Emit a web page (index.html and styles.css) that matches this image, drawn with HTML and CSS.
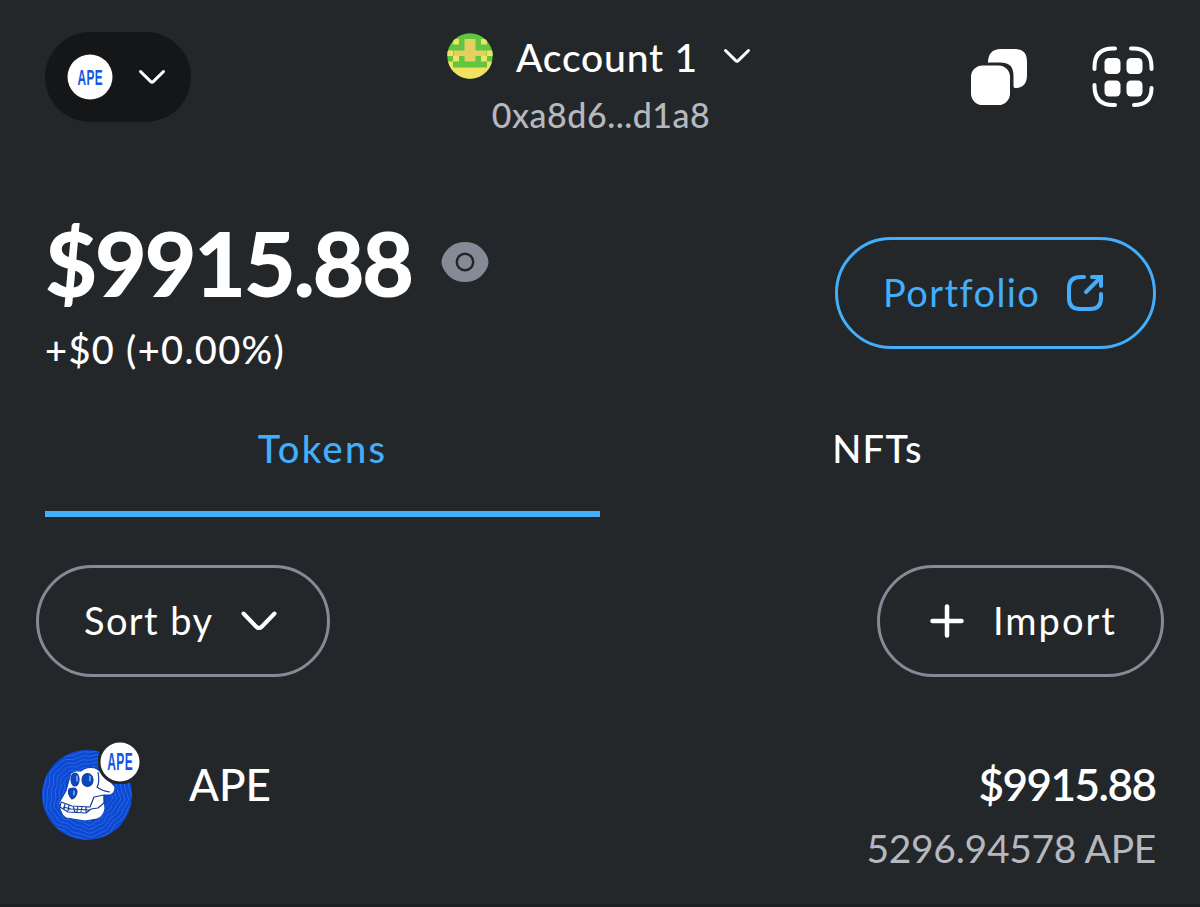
FILE: index.html
```html
<!DOCTYPE html>
<html lang="en">
<head>
<meta charset="utf-8">
<title>Wallet</title>
<link rel="stylesheet" href="styles.css">
</head>
<body>
<main class="wallet">
  <header class="header">
    <div class="network">
      <svg class="network-logo" viewBox="0 0 46 46"><circle cx="23" cy="23" r="22.5" fill="#fff"/><text class="ape-text" transform="translate(10.500 31) scale(1 1.850)" font-size="11.800">APE</text></svg>
      <svg class="chevron" viewBox="0 0 28 16"><path d="M2.5 2.5 12.5 12.4Q14 13.8 15.5 12.4L25.5 2.5"/></svg>
    </div>
    <div class="account">
      <div class="account-row">
        <svg class="avatar" viewBox="0 0 46 46">
          <clipPath id="avatar-clip"><circle cx="23" cy="23" r="22.7"/></clipPath>
          <g clip-path="url(#avatar-clip)">
            <path fill="#61c53f" d="M0 0h46v46H0z"/>
            <path fill="#f3e162" d="M6 6h6v5.500H6zM34 6h6v5.500h-6zM0 17.500h6v5.500H0zM40 17.500h6v5.500h-6zM6 23h6v5.500H6zM34 23h6v5.500h-6zM0 28.500h6v6H0zM40 28.500h6v6h-6zM0 34.500h46V46H0z"/>
            <path fill="#e3cf62" d="M17.500 6h11v11.500H39.500V23H28.500v5.500h-11V23H6.500v-5.500h11z"/>
          </g>
        </svg>
        <span class="account-name">Account 1</span>
        <svg class="chevron account-chevron" viewBox="0 0 28 16"><path d="M2.5 2.5 12.5 12.4Q14 13.8 15.5 12.4L25.5 2.5"/></svg>
      </div>
      <span class="address">0xa8d6...d1a8</span>
    </div>
    <div class="actions">
      <svg class="copy" viewBox="0 0 58 58"><rect x="1" y="17.5" width="39" height="39.5" rx="11.5"/><path d="M18 15C18 6 22 1 31 1H44C53 1 57 5 57 14V27C57 36 53 40 45 40Q43.5 40 43.5 38V28C43.5 18 39 14.5 30 14.5H19Z"/></svg>
      <svg class="scan" viewBox="0 0 62 62"><path class="scan-frame" d="M23 2.5H21Q2.5 2.5 2.5 21V23M39 2.5H41Q59.5 2.5 59.5 21V23M23 59H21Q2.5 59 2.5 40V39M42 59Q59.5 59 59.5 42"/><g fill="#fff"><rect x="12.5" y="12" width="16" height="16" rx="4.500"/><rect x="34.5" y="12" width="16" height="16" rx="4.500"/><rect x="12.5" y="34.5" width="16" height="16" rx="4.500"/><rect x="34.5" y="34.5" width="16" height="16" rx="4.500"/></g></svg>
    </div>
  </header>

  <section class="summary">
    <div class="totals">
      <div class="balance-row"><span class="balance">$9915.88</span>
        <svg class="eye" viewBox="0 0 48 42"><path fill="#858b96" d="M24 1C35 1 42 7 46 15Q49 21 46 27C42 35 35 41 24 41S6 35 2 27Q-1 21 2 15C6 7 13 1 24 1Z"/><circle cx="24" cy="21" r="8.2" fill="none" stroke="#24272a" stroke-width="2.5"/></svg>
      </div>
      <span class="change">+$0 (+0.00%)</span>
    </div>
    <div class="pill portfolio"><span>Portfolio</span>
      <svg class="export" viewBox="0 0 36 36"><path d="M17 2H14Q2 2 2 13V23Q2 34 13 34H23Q34 34 34 23V19M19 17 33 3M25 2H34V11"/></svg>
    </div>
  </section>

  <nav class="tabs">
    <div class="tab tab-active"><span>Tokens</span></div>
    <div class="tab"><span>NFTs</span></div>
  </nav>

  <section class="controls">
    <div class="pill sort"><span>Sort by</span>
      <svg class="sort-chevron" viewBox="0 0 36 20"><path d="M2.5 2.5 15 15.5Q18 18.5 21 15.5L33.5 2.5"/></svg>
    </div>
    <div class="pill import">
      <svg class="plus" viewBox="0 0 34 34"><path d="M17 2.5V31.5M2.5 17H31.5"/></svg><span>Import</span>
    </div>
  </section>

  <section class="token">
    <div class="token-logo">
      <svg class="coin" viewBox="0 0 92 92">
        <clipPath id="coin-clip"><circle cx="46" cy="46" r="45"/></clipPath>
        <g clip-path="url(#coin-clip)">
          <path fill="#0d49d2" d="M0 0h92v92H0z"/>
          <g id="waves" class="waves"></g>
          <path fill="#fff" stroke="#0a3fb4" d="M30 24Q34 21 40 22Q46 17 54 19L62 24 74 38Q74 44 69 46L63 46 64 60Q62 68 56 70L44 72 25 69Q21 67 19 60L18 54 25 42 28 31Z"/>
          <g class="skull-line">
            <g fill="#0848c4"><ellipse cx="34" cy="30.500" rx="4" ry="6.500"/><ellipse cx="46.500" cy="31" rx="5.500" ry="6.500"/><path d="M28 40Q36 37 36 43 35 49 31 50 26 45 28 40Z"/></g>
            <path d="M57 23Q59 34 56 38 61 42 69 43M63 46 53 48 49 58 31 57 20 53 19 58 27 63 45 64 50 60M63 46V54L57 59 50 60M24 55 23 60M28 56 27 62M32 57 34 63M37 57 36 63M41 57 40 63M45 58V63M22 58 30 60 48 61"/>
          </g>
          <path class="glint" d="M36 27V32M49 27V32M33 42V46"/>
        </g>
      </svg>
      <svg class="token-badge" viewBox="0 0 44 44"><circle cx="22" cy="22" r="21" fill="#fff" stroke="#24272a" stroke-width="3"/><text class="ape-text" transform="translate(9.300 30.300) scale(1 1.920)" font-size="12">APE</text></svg>
    </div>
    <span class="token-name">APE</span>
    <div class="token-values"><span class="token-fiat">$9915.88</span><span class="token-amount">5296.94578 APE</span></div>
  </section>
</main>
<script src="script.js"></script>
</body>
</html>
```

FILE: script.js
```js
// Concentric rippled contours behind the coin emblem.
const waves = document.getElementById('waves');
for (let r = 24; r < 58; r += 4) {
  let d = '';
  for (let i = 0; i <= 180; i++) {
    const a = i / 180 * Math.PI * 2;
    const q = r + 0.8 * Math.sin(a * 14) + 1.8 * Math.sin(a * 5 + 1);
    d += (i ? 'L' : 'M') + (45 + q * Math.cos(a)).toFixed(1) + ' ' + (46 + q * Math.sin(a)).toFixed(1);
  }
  const p = document.createElementNS('http://www.w3.org/2000/svg', 'path');
  p.setAttribute('d', d + 'Z');
  waves.appendChild(p);
}
```

FILE: styles.css
```css
* { box-sizing: border-box; }
body { margin: 0; background: #24272a; color: #fff; font-family: Lato, "Open Sans", sans-serif; }
.wallet { width: 1200px; height: 907px; overflow: hidden; border-bottom: 3px solid #1d2023; }
svg { display: block; flex: none; fill: none; }
span { white-space: nowrap; }
.header { display: grid; grid-template-columns: 320px 1fr 320px; height: 205px; padding: 32px 45px 0; align-items: start; }
.network { display: flex; align-items: center; gap: 25px; width: 146px; height: 90px; padding-left: 22px; border-radius: 45px; background: #141618; }
.network-logo { width: 46px; height: 46px; }
.ape-text { font-family: "Liberation Sans", sans-serif; font-weight: 700; letter-spacing: 0.4px; fill: #1657e2; }
.chevron { width: 28px; height: 16px; stroke: #fff; stroke-width: 3; stroke-linecap: round; }
.account { display: flex; flex-direction: column; align-items: center; }
.account-row { display: flex; align-items: center; height: 48px; margin-left: -2px; }
.avatar { width: 46px; height: 46px; margin-right: 23px; }
.account-name { font-size: 39px; font-weight: 500; line-height: 50px; letter-spacing: 0.8px; padding-top: 2px; }
.account-chevron { margin-left: 25px; }
.address { font-size: 34px; font-weight: 500; line-height: 44px; letter-spacing: 0.5px; color: #b5b8be; margin-top: 13px; padding-left: 2px; }
.actions { display: flex; justify-content: flex-end; gap: 64px; padding: 14px 1px 0 0; }
.copy { width: 58px; height: 58px; margin-top: 2px; fill: #fff; }
.scan { width: 62px; height: 62px; }
.scan-frame { stroke: #fff; stroke-width: 4; stroke-linecap: round; }
.summary { display: flex; justify-content: space-between; height: 190px; padding: 0 44px 0 45px; }
.balance-row { display: flex; align-items: center; gap: 29px; height: 114px; }
.balance { font-size: 90px; font-weight: 900; line-height: 114px; letter-spacing: -2.5px; }
.eye { width: 48px; height: 42px; }
.change { display: block; font-size: 38px; line-height: 48px; margin-top: 6px; font-weight: 500; letter-spacing: 1.35px; }
.pill { display: flex; align-items: center; height: 112px; border: 3px solid #858b96; border-radius: 56px; font-size: 38px; line-height: 50px; letter-spacing: 1.4px; }
.pill span { padding-bottom: 2px; }
.portfolio { width: 321px; margin-top: 32px; padding: 0 0 0 45px; border-color: #43aefc; color: #43aefc; gap: 27px; }
.export { width: 36px; height: 36px; stroke: #43aefc; stroke-width: 4; stroke-linecap: round; }
.tabs { display: flex; height: 122px; padding: 0 45px; }
.tab { flex: 1; display: flex; justify-content: center; padding-top: 28px; font-size: 38px; line-height: 50px; font-weight: 500; letter-spacing: 1.3px; }
.tab-active { letter-spacing: 2.3px; color: #43aefc; border-bottom: 6px solid #43aefc; }
.controls { display: flex; justify-content: space-between; padding: 48px 36px 0; }
.sort { width: 294px; padding-left: 45px; gap: 28px; }
.sort-chevron { width: 36px; height: 20px; stroke: #fff; stroke-width: 4; stroke-linecap: round; }
.import { width: 287px; padding-left: 50px; gap: 29px; letter-spacing: 2px; }
.plus { width: 34px; height: 34px; stroke: #fff; stroke-width: 4.5; stroke-linecap: round; }
.token { display: flex; padding: 63px 44px 0 41px; }
.token-logo { position: relative; width: 100px; height: 100px; margin-right: 48px; }
.coin { width: 92px; height: 92px; margin-top: 9px; }
.waves { stroke: #2f6fe8; stroke-width: 0.9; }
.skull-line { stroke: #173c9a; stroke-width: 1.2; stroke-linejoin: round; }
.glint { stroke: #dbe6ff; stroke-width: 1; stroke-linecap: round; }
.token-badge { position: absolute; top: 0; left: 57px; width: 44px; height: 44px; }
.token-name { font-size: 44px; font-weight: 500; line-height: 56px; margin-top: 16px; }
.token-values { margin: 16px 0 0 auto; display: flex; flex-direction: column; align-items: flex-end; }
.token-fiat { font-size: 44px; font-weight: 600; line-height: 56px; letter-spacing: -1.5px; padding-right: 0.5px; }
.token-amount { font-size: 39px; line-height: 50px; margin-top: 11px; letter-spacing: -0.3px; color: #b5b8be; }
```
